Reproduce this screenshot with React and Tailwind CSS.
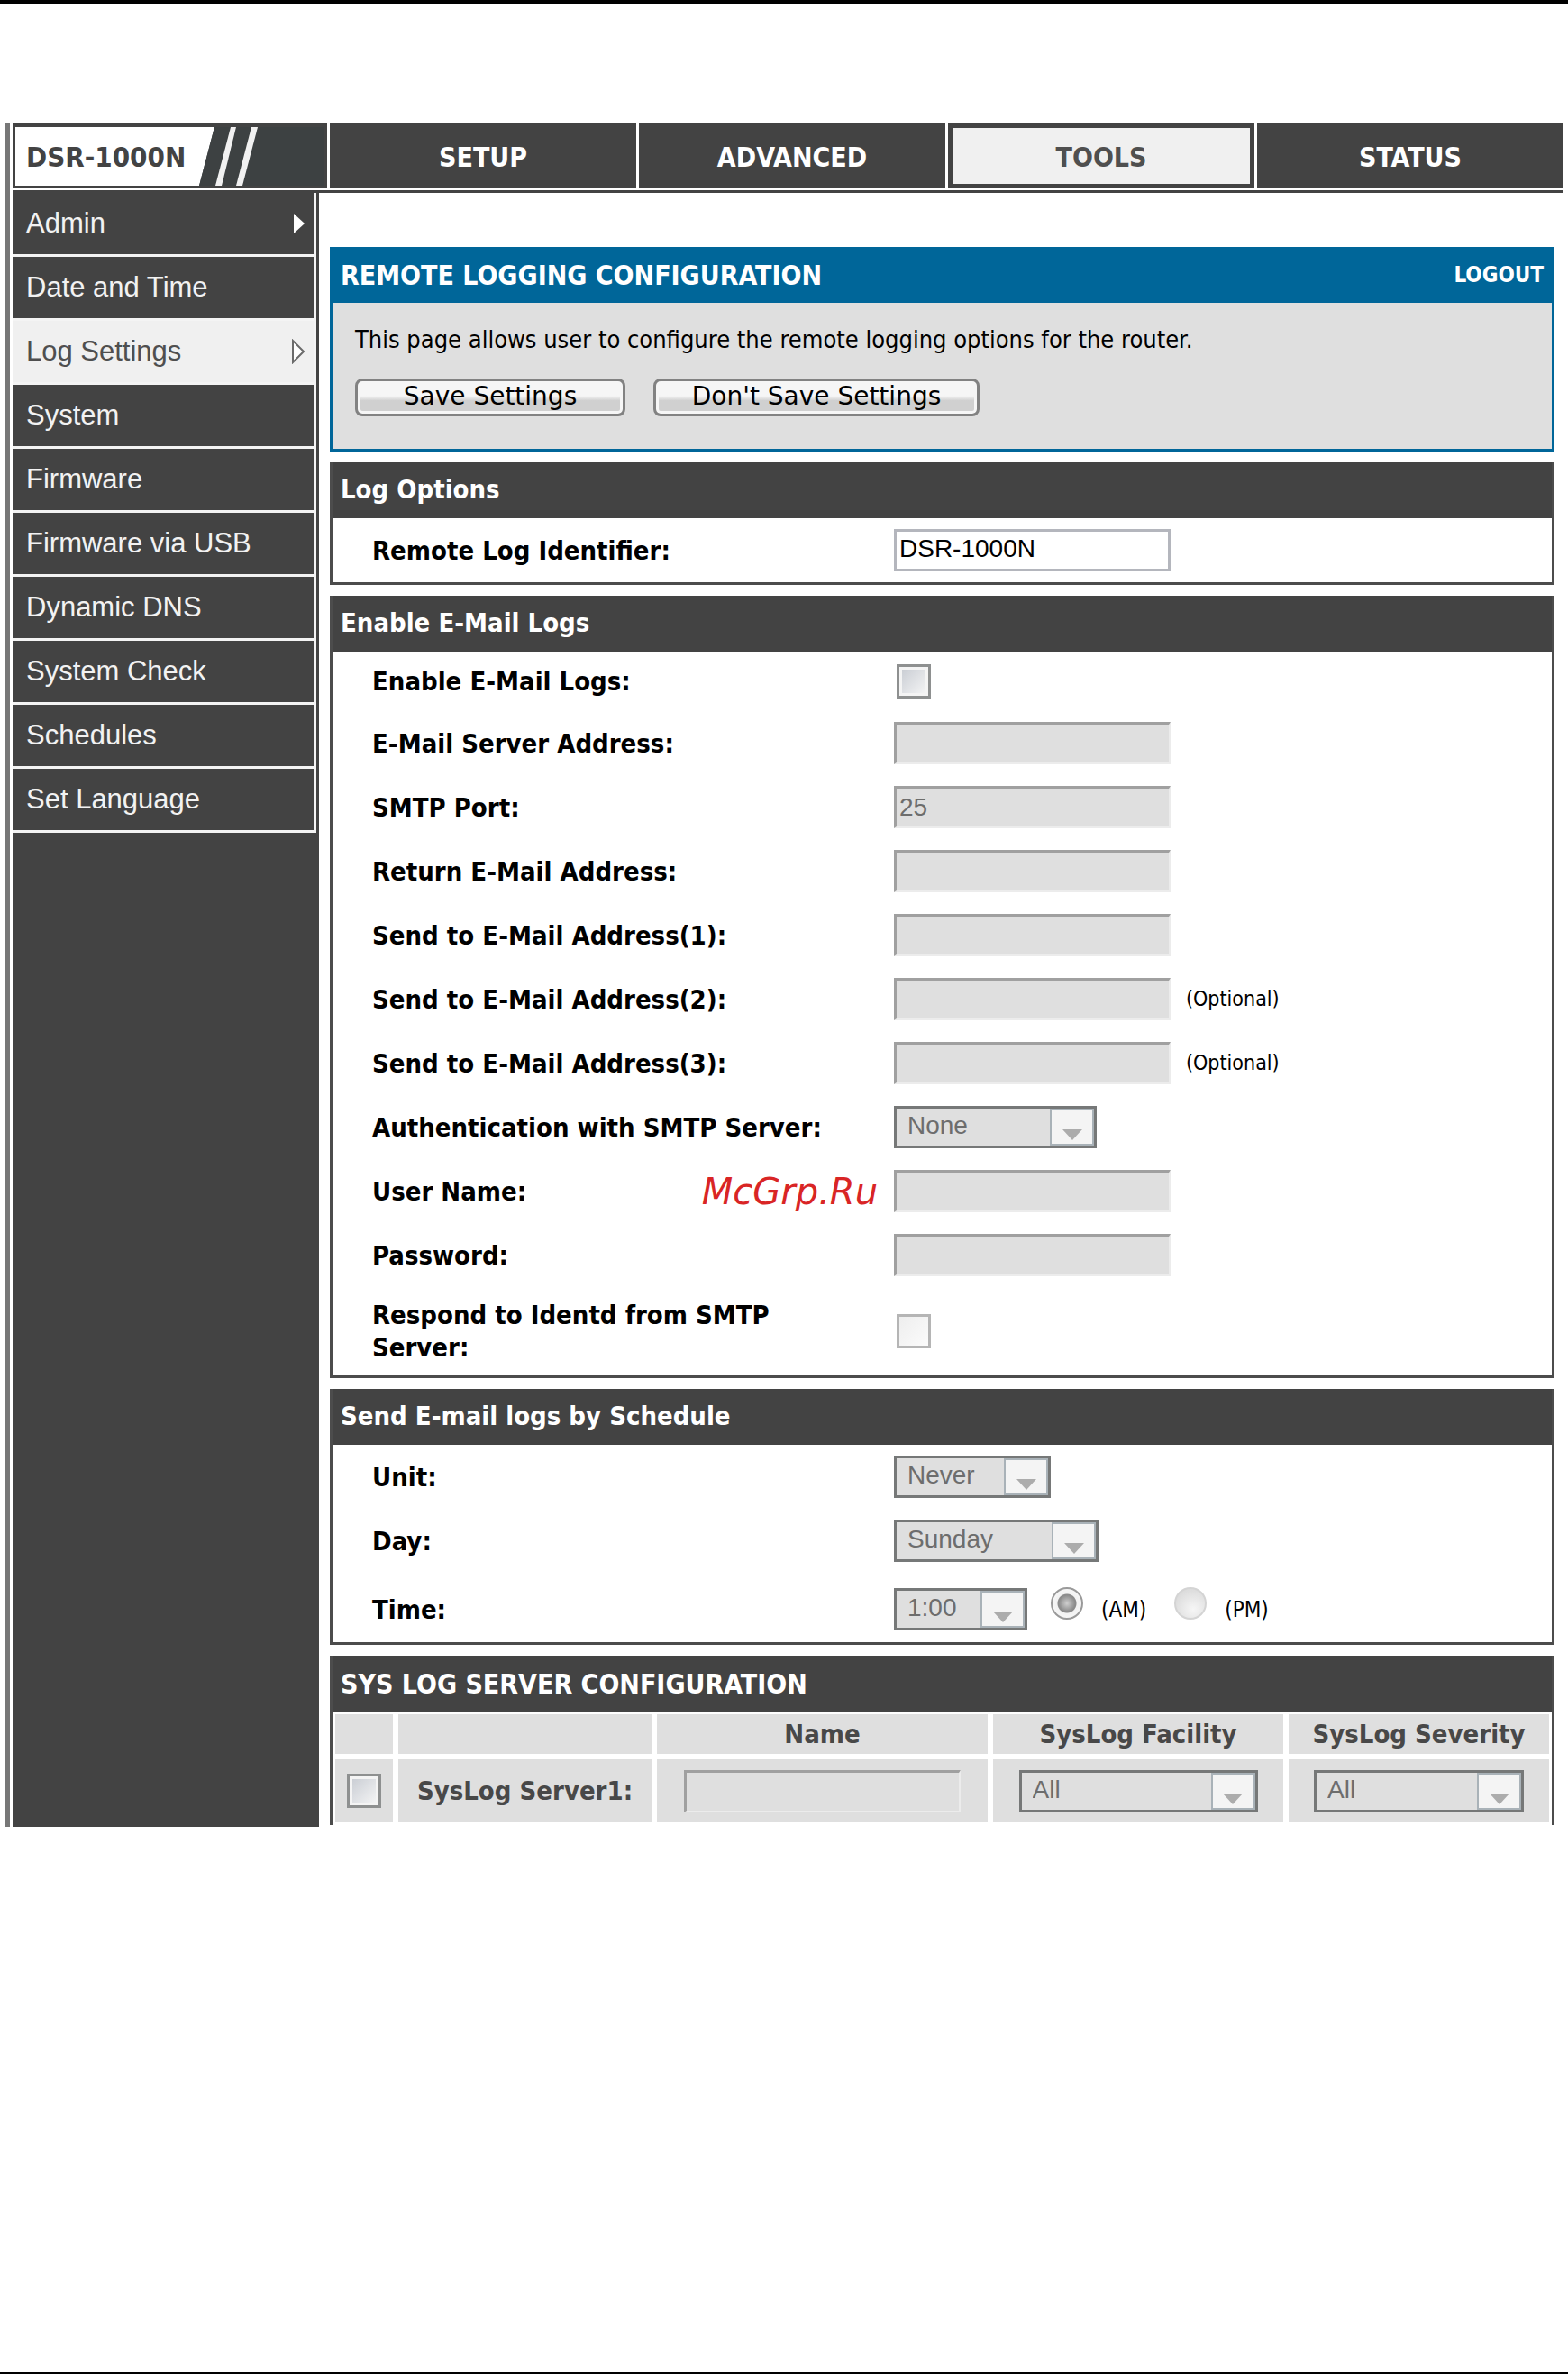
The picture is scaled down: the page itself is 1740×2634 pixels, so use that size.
const tabs = [
  { label: "SETUP" },
  { label: "ADVANCED" },
  { label: "TOOLS", active: true },
  { label: "STATUS" },
];

const menu = [
  { label: "Admin", submenu: true },
  { label: "Date and Time" },
  { label: "Log Settings", active: true },
  { label: "System" },
  { label: "Firmware" },
  { label: "Firmware via USB" },
  { label: "Dynamic DNS" },
  { label: "System Check" },
  { label: "Schedules" },
  { label: "Set Language" },
];

function Logo() {
  return (
    <div className="relative flex items-center bg-[#434343] pt-[3px] pl-[15px]">
      <svg className="absolute inset-0 h-full w-full" viewBox="0 0 349 72" preserveAspectRatio="xMinYMid meet" aria-hidden="true">
        <rect x="180" y="4" width="165" height="65" fill="#3d4142" />
        <polygon points="3,4 224,4 207,69 3,69" fill="#fff" />
        <polygon points="224,4 345,4 345,69 207,69" fill="#3d4142" />
        <polygon points="242,4 248,4 232,69 225,69" fill="#f1f1f1" />
        <polygon points="265,4 272,4 255,69 248,69" fill="#f1f1f1" />
      </svg>
      <span className="relative text-[31px] font-bold text-[#434343]">DSR-1000N</span>
    </div>
  );
}

function Header() {
  return (
    <nav className="grid h-[72px] grid-cols-[349px_repeat(4,1fr)] gap-[3px]" aria-label="Main">
      <Logo />
      {tabs.map((tab) => (
        <a
          key={tab.label}
          href="#"
          className={
            tab.active
              ? "flex items-center justify-center border-[5px] border-[#434343] bg-[#f0f0f0] pt-[3px] text-[30px] font-bold text-[#4f4f4f]"
              : "flex items-center justify-center bg-[#434343] pt-[3px] text-[30px] font-bold text-white"
          }
        >
          {tab.label}
        </a>
      ))}
    </nav>
  );
}

function Sidebar() {
  return (
    <aside className="w-[340px] shrink-0 bg-[#434343] pr-[3px]">
      <ul className="border-r-[3px] border-[#f4f4f4] font-['Liberation_Sans',sans-serif]">
        {menu.map((item) => (
          <li key={item.label} className="border-b-[3px] border-[#f4f4f4]">
            <a
              href="#"
              className={
                item.active
                  ? "flex h-[68px] items-center justify-between bg-[#f0f0f0] pr-[9px] pl-[15px] text-[31px] text-[#4f4f4f]"
                  : "flex h-[68px] items-center justify-between bg-[#434343] pr-[9px] pl-[15px] text-[31px] text-[#f2f2f2]"
              }
            >
              {item.label}
              {item.submenu && (
                <svg width="14" height="24" viewBox="0 0 14 24" aria-hidden="true">
                  <path d="M1 1 L13 12 L1 23 Z" fill="#fff" />
                </svg>
              )}
              {item.active && (
                <svg width="16" height="28" viewBox="0 0 16 28" aria-hidden="true">
                  <path d="M2 2 L14 14 L2 26 Z" fill="#fff" stroke="#6b6b6b" strokeWidth="2" />
                </svg>
              )}
            </a>
          </li>
        ))}
      </ul>
    </aside>
  );
}

function Panel({ title, children }) {
  return (
    <section className="mt-3 border-[3px] border-t-0 border-[#4c4c4c]">
      <h2 className="flex h-[62px] items-center bg-[#434343] pl-[9px] text-[29px] font-bold text-white">{title}</h2>
      {children}
    </section>
  );
}

function Row({ id, label, mark, height = "h-[71px]", children }) {
  return (
    <div className={"grid grid-cols-[579px_1fr] items-center pl-11 " + height}>
      <div className="relative flex h-full items-center">
        <label htmlFor={id} className="w-[510px] text-[29px] leading-9 font-bold text-black">
          {label}
        </label>
        {mark && (
          <span className="absolute right-[18px] font-['DejaVu_Sans',sans-serif] text-[40px] leading-none text-[#d92525] italic">
            {mark}
          </span>
        )}
      </div>
      <div className="flex h-full items-center">{children}</div>
    </div>
  );
}

function TextBox({ type = "text", ...props }) {
  return (
    <input
      type={type}
      disabled
      className="h-[47px] w-[307px] border-t-[3px] border-r-2 border-b-2 border-l-[3px] border-t-[#a0a0a0] border-r-[#ececec] border-b-[#ececec] border-l-[#a0a0a0] bg-[#dfdfdf] pl-[3px] font-['Liberation_Sans',sans-serif] text-[28px] text-[#6d6d6d]"
      {...props}
    />
  );
}

function Select({ id, value, width, label }) {
  return (
    <div className={"relative h-[47px] " + width}>
      <select
        id={id}
        aria-label={label}
        disabled
        className="h-full w-full appearance-none border-[3px] border-[#767878] bg-[#dfdfdf] pb-[3px] pl-3 font-['Liberation_Sans',sans-serif] text-[28px] leading-9 text-[#6d6d6d] opacity-100"
      >
        <option>{value}</option>
      </select>
      <span className="pointer-events-none absolute inset-y-[3px] right-[3px] flex w-[49px] items-end justify-center border-2 border-[#a9b2b8] bg-[#f4f4f4] pb-[4px]">
        <svg width="22" height="12" viewBox="0 0 22 12" aria-hidden="true">
          <path d="M0 0 H22 L11 12 Z" fill="#acacac" />
        </svg>
      </span>
    </div>
  );
}

function CheckBox({ disabled, ...props }) {
  return (
    <input
      type="checkbox"
      disabled={disabled}
      className={
        disabled
          ? "size-[38px] appearance-none border-[3px] border-[#b5b5b5] bg-linear-to-br from-[#eeeeee] to-[#fbfbfb]"
          : "size-[38px] appearance-none border-[3px] border-[#8e9090] bg-[#f4f4f4] bg-linear-to-br from-[#c6cad1] to-[#f8f8f8] bg-clip-content p-[3px] shadow-[inset_0_0_0_3px_#f4f4f4]"
      }
      {...props}
    />
  );
}

function Radio({ id, label, checked }) {
  return (
    <div className="flex h-full gap-5">
      <input
        id={id}
        type="radio"
        name="meridiem"
        disabled
        defaultChecked={checked}
        className={
          checked
            ? "size-9 appearance-none rounded-full border-2 border-[#9a9a9a] bg-[radial-gradient(circle,#cfcfcf_0px,#8c8c8c_9px,#8c8c8c_10px,#f2f2f2_11px,#f6f6f6_16px)]"
            : "size-9 appearance-none rounded-full border-2 border-[#d4d4d4] bg-[radial-gradient(circle_at_60%_70%,#f6f6f6_0px,#dcdcdc_22px)]"
        }
      />
      <label htmlFor={id} className="self-center text-[24px] text-black">
        {label}
      </label>
    </div>
  );
}

function ActionButton({ children, width }) {
  return (
    <button
      type="button"
      className={
        "flex h-[42px] items-center justify-center rounded-lg border-[3px] border-[#828282] bg-linear-to-b from-[#f6f6f6] from-45% to-[#d0d0d0] to-60% pb-[2px] font-['DejaVu_Sans',sans-serif] text-[28px] leading-none text-black shadow-[inset_0_0_0_3px_#f6f6f6] " +
        width
      }
    >
      {children}
    </button>
  );
}

function SysLogTable() {
  const th = "h-[50px] border-[3px] border-white bg-[#dfdfdf] bg-clip-padding p-0 text-center text-[29px] leading-9 font-bold text-[#484848]";
  const td = "h-[76px] border-[3px] border-white bg-[#dfdfdf] bg-clip-padding p-0";
  return (
    <table className="mb-[2px] w-full table-fixed border-separate border-spacing-0">
      <colgroup>
        <col className="w-[70px]" />
        <col className="w-[287px]" />
        <col className="w-[373px]" />
        <col className="w-[328px]" />
        <col />
      </colgroup>
      <thead>
        <tr>
          <td className={th} />
          <td className={th} />
          <th className={th}>Name</th>
          <th className={th}>SysLog Facility</th>
          <th className={th}>SysLog Severity</th>
        </tr>
      </thead>
      <tbody>
        <tr>
          <td className={td}>
            <div className="flex justify-center">
              <CheckBox id="syslog1" />
            </div>
          </td>
          <td className={td}>
            <label htmlFor="syslog1" className="block text-center text-[29px] leading-9 font-bold text-[#484848]">
              SysLog Server1:
            </label>
          </td>
          <td className={td}>
            <div className="flex justify-center">
              <TextBox aria-label="SysLog Server1 name" />
            </div>
          </td>
          <td className={td}>
            <div className="flex justify-center">
              <Select label="SysLog Facility" value="All" width="w-[265px]" />
            </div>
          </td>
          <td className={td}>
            <div className="flex justify-center">
              <Select label="SysLog Severity" value="All" width="w-[233px]" />
            </div>
          </td>
        </tr>
      </tbody>
    </table>
  );
}

export default function App() {
  return (
    <div className="flex min-h-screen flex-col border-t-4 border-b-2 border-black bg-white pt-[132px] font-['DejaVu_Sans_Condensed','DejaVu_Sans',sans-serif]">
      <div className="mr-[5px] ml-[6px] border-l-[5px] border-[#777777] pt-px pl-[3px]">
        <Header />
        <div className="mt-[2px] flex border-t-[3px] border-[#434343]">
          <Sidebar />
          <main className="min-w-0 flex-1 pt-[60px] pr-[10px] pl-3">
            <section className="border-[3px] border-t-0 border-[#006699] bg-[#dfdfdf]">
              <div className="flex h-[62px] items-center justify-between bg-[#006699] px-[9px] font-bold text-white">
                <h1 className="text-[30px]">REMOTE LOGGING CONFIGURATION</h1>
                <a href="#" className="text-[24px]">
                  LOGOUT
                </a>
              </div>
              <div className="px-[25px] pt-[23px] pb-9">
                <p className="text-[27px] leading-9 text-black">
                  This page allows user to configure the remote logging options for the router.
                </p>
                <div className="mt-[25px] flex gap-[31px]">
                  <ActionButton width="w-[300px]">Save Settings</ActionButton>
                  <ActionButton width="w-[362px]">Don't Save Settings</ActionButton>
                </div>
              </div>
            </section>

            <Panel title="Log Options">
              <Row id="identifier" label="Remote Log Identifier:">
                <input
                  id="identifier"
                  type="text"
                  defaultValue="DSR-1000N"
                  className="h-[47px] w-[307px] border-[3px] border-[#b4b6bd] bg-white pb-[3px] pl-[3px] font-['Liberation_Sans',sans-serif] text-[28px] text-black"
                />
              </Row>
            </Panel>

            <Panel title="Enable E-Mail Logs">
              <Row id="enable" label="Enable E-Mail Logs:" height="h-[66px]">
                <div className="flex pl-[3px]">
                  <CheckBox id="enable" />
                </div>
              </Row>
              <Row id="server" label="E-Mail Server Address:">
                <TextBox id="server" />
              </Row>
              <Row id="port" label="SMTP Port:">
                <TextBox id="port" defaultValue="25" />
              </Row>
              <Row id="return" label="Return E-Mail Address:">
                <TextBox id="return" />
              </Row>
              <Row id="send1" label="Send to E-Mail Address(1):">
                <TextBox id="send1" />
              </Row>
              <Row id="send2" label="Send to E-Mail Address(2):">
                <TextBox id="send2" />
                <span className="ml-[17px] text-[23px] text-black">(Optional)</span>
              </Row>
              <Row id="send3" label="Send to E-Mail Address(3):">
                <TextBox id="send3" />
                <span className="ml-[17px] text-[23px] text-black">(Optional)</span>
              </Row>
              <Row id="auth" label="Authentication with SMTP Server:">
                <Select id="auth" value="None" width="w-[225px]" />
              </Row>
              <Row id="user" label="User Name:" mark="McGrp.Ru">
                <TextBox id="user" />
              </Row>
              <Row id="password" label="Password:">
                <TextBox id="password" type="password" />
              </Row>
              <Row id="identd" label="Respond to Identd from SMTP Server:" height="h-[98px]">
                <div className="flex pl-[3px]">
                  <CheckBox id="identd" disabled />
                </div>
              </Row>
            </Panel>

            <Panel title="Send E-mail logs by Schedule">
              <Row id="unit" label="Unit:">
                <Select id="unit" value="Never" width="w-[174px]" />
              </Row>
              <Row id="day" label="Day:">
                <Select id="day" value="Sunday" width="w-[227px]" />
              </Row>
              <Row id="time" label="Time:" height="h-[77px] pt-1">
                <div className="flex h-[50px] items-center">
                  <Select id="time" value="1:00" width="w-[148px]" />
                  <div className="ml-[26px] flex h-full gap-[31px]">
                    <Radio id="am" label="(AM)" checked />
                    <Radio id="pm" label="(PM)" />
                  </div>
                </div>
              </Row>
            </Panel>

            <section className="mt-3 border-x-[3px] border-[#4c4c4c]">
              <h2 className="flex h-[62px] items-center bg-[#434343] pl-[9px] text-[30px] font-bold text-white">
                SYS LOG SERVER CONFIGURATION
              </h2>
              <SysLogTable />
            </section>
          </main>
        </div>
      </div>
    </div>
  );
}
